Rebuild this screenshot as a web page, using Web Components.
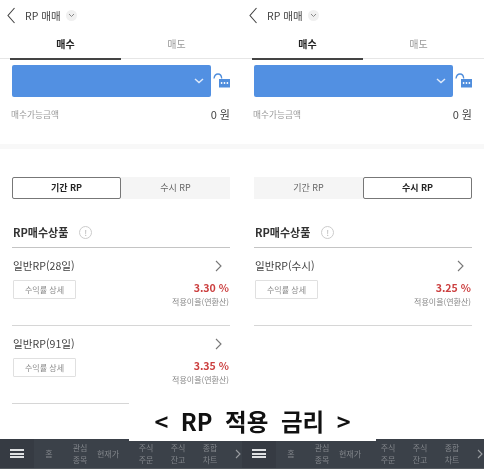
<!doctype html>
<html lang="ko">
<head>
<meta charset="UTF-8">
<title>RP 매매</title>
<style>
    html, body { margin: 0; padding: 0; background: #fff; }
    body { font-family: "Noto Sans CJK KR", "Noto Sans", sans-serif; width: 484px; height: 475px; overflow: hidden; position: relative; filter: blur(.3px); }
    #page { display: flex; }
</style>
</head>
<body>
<div id="page">
    <rp-panel active="0">
        <rp-product name="일반RP(28일)" rate="3.30 %"></rp-product>
        <rp-product name="일반RP(91일)" rate="3.35 %"></rp-product>
    </rp-panel>
    <rp-panel active="1">
        <rp-product name="일반RP(수시)" rate="3.25 %"></rp-product>
    </rp-panel>
</div>
<rp-caption>&lt; RP 적용 금리 &gt;</rp-caption>

<script type="text/javascript">
    const chevron = (d, w, h, color, sw) => `<svg width="${w}" height="${h}" viewBox="0 0 ${w} ${h}" fill="none"><path d="${d}" stroke="${color}" stroke-width="${sw}"/></svg>`

    // 상품 한 줄
    class RpProduct extends HTMLElement {
        constructor () {
            super()
            const root = this.attachShadow({mode: 'open'})
            root.innerHTML = `
            <style>
            :host { display: block; height: 77px; border-bottom: 1px solid #d6d6d6; position: relative; }
            .top { display: flex; justify-content: space-between; align-items: center; padding: 8px 8px 0 1px; height: 20px; }
            .name { font-size: 10.6px; color: #444; line-height: 20px; }
            .bottom { display: flex; justify-content: space-between; padding: 4px 1px 0 1px; }
            button { all: unset; box-sizing: border-box; width: 63px; height: 19px; border: 1px solid #e0e0e0; border-radius: 1px; font-size: 8px; color: #888; text-align: center; line-height: 17px; }
            .right { text-align: right; }
            .rate { font-size: 10.6px; font-weight: 700; color: #cc4040; line-height: 16px; }
            .sub { font-size: 8px; color: #888; line-height: 12px; margin-top: 0; }
            svg { display: block; }
            </style>
            <div class="top"><span class="name"></span>${chevron('M1 1l5 5-5 5', 7, 12, '#777', 1.1)}</div>
            <div class="bottom">
                <button>수익률 상세</button>
                <div class="right"><div class="rate"></div><div class="sub">적용이율(연환산)</div></div>
            </div>`
            root.querySelector('.name').textContent = this.getAttribute('name')
            root.querySelector('.rate').textContent = this.getAttribute('rate')
        }
    }
    customElements.define('rp-product', RpProduct)

    // 하단 메뉴
    class RpNav extends HTMLElement {
        constructor () {
            super()
            const root = this.attachShadow({mode: 'open'})
            root.innerHTML = `
            <style>
            :host { display: grid; grid-template-columns: 34px 30px 32px 34px 32px 32px 32px 16px; height: 30px; box-sizing: border-box; background: #3b4149; border-bottom: 1px solid #555a60; color: #82868b; font-size: 8px; line-height: 12px; }
            div { display: flex; align-items: center; justify-content: center; text-align: center; }
            .menu { background: #363b43; }
            .menu i { display: block; width: 14px; height: 9px; border-top: 2px solid #dfe1e3; border-bottom: 2px solid #dfe1e3; position: relative; box-sizing: border-box; }
            .menu i::after { content: ""; position: absolute; left: 0; right: 0; top: 1.5px; height: 2px; background: #dfe1e3; }
            .price { padding-right: 10px; white-space: nowrap; }
            .more { padding-left: 8px; }
            </style>
            <div class="menu"><i></i></div>
            <div>홈</div>
            <div>관심<br>종목</div>
            <div class="price">현재가</div>
            <div>주식<br>주문</div>
            <div>주식<br>잔고</div>
            <div>종합<br>차트</div>
            <div class="more">${chevron('M1 1l4 4-4 4', 6, 10, '#9a9da1', 1.1)}</div>`
        }
    }
    customElements.define('rp-nav', RpNav)

    // 화면 한 장
    class RpPanel extends HTMLElement {
        constructor () {
            super()
            const on = this.getAttribute('active') === '1'
            const root = this.attachShadow({mode: 'open'})
            root.innerHTML = `
            <style>
            :host { display: flex; flex-direction: column; width: 242px; height: 469px; box-sizing: border-box; color: #333; }
            svg { display: block; }
            header { display: flex; align-items: center; height: 30px; padding-left: 7px; }
            header .title { font-size: 10.5px; color: #444; margin-left: 9px; }
            header .down { width: 11px; height: 11px; border-radius: 50%; background: #f0f0f0; margin-left: 5px; display: flex; align-items: center; justify-content: center; }
            .tabs { display: grid; grid-template-columns: 111px 111px; padding-left: 10px; height: 28px; border-bottom: 1px solid #e6e6e6; }
            .tabs div { text-align: center; font-size: 10px; line-height: 28px; color: #999; box-sizing: border-box; }
            .tabs .on { color: #222; font-weight: 700; border-bottom: 2px solid #444; }
            .account { display: flex; align-items: center; margin: 6px 0 0 12px; }
            .box { width: 199px; height: 32px; background: #5290e2; border-radius: 2px; display: flex; align-items: center; justify-content: flex-end; padding-right: 7px; box-sizing: border-box; }
            .lock { margin-left: 2px; }
            .cash { display: flex; justify-content: space-between; align-items: center; padding: 0 12px 0 11px; height: 16px; margin-top: 9px; }
            .cash .l { font-size: 8.7px; color: #999; }
            .cash .r { font-size: 11px; color: #444; }
            .band { height: 5px; background: #f8f8f8; margin-top: 22px; }
            .seg { display: grid; grid-template-columns: 1fr 1fr; margin: 28px 12px 0; height: 22px; background: #f5f5f5; }
            .seg div { text-align: center; font-size: 9px; line-height: 20px; color: #666; border: 1px solid transparent; box-sizing: border-box; }
            .seg .on { background: #fff; border: 1px solid #777; border-radius: 2px; color: #222; font-weight: 700; }
            .head { display: flex; align-items: center; margin: 22px 12px 0; height: 22px; border-bottom: 1px solid #c4c4c4; padding: 0 1px 4px; }
            .head b { font-size: 11px; color: #333; }
            .head .info { width: 13px; height: 13px; border: 1px solid #ccc; border-radius: 50%; box-sizing: border-box; margin-left: 11px; font-size: 8px; line-height: 11px; text-align: center; color: #aaa; }
            .list { margin: 0 12px; }
            rp-nav { margin-top: auto; }
            </style>
            <header>
                ${chevron('M7.5 1L1 8.5 7.5 16', 9, 17, '#444', 1.1)}
                <span class="title">RP 매매</span>
                <span class="down">${chevron('M1 1l2.5 2.5L6 1', 7, 5, '#888', 1)}</span>
            </header>
            <div class="tabs">
                <div class="on">매수</div>
                <div>매도</div>
            </div>
            <div class="account">
                <div class="box">${chevron('M1 1l4 3.5L9 1', 10, 6, '#dfeafa', 1.5)}</div>
                <svg class="lock" width="18" height="16" viewBox="0 0 18 16" fill="none">
                    <path d="M1 5.5C1.5 2 3 1 5 1c2 0 3.5 1.5 3.7 4.5" stroke="#4f8ddc" stroke-width="1.3"/>
                    <rect x="6" y="6" width="11" height="8.5" fill="#4f8ddc"/>
                    <circle cx="8.6" cy="10" r=".9" fill="#fff"/><circle cx="11.5" cy="10" r=".9" fill="#fff"/><circle cx="14.4" cy="10" r=".9" fill="#fff"/>
                </svg>
            </div>
            <div class="cash"><span class="l">매수가능금액</span><span class="r">0 원</span></div>
            <div class="band"></div>
            <div class="seg">
                <div class="${on ? '' : 'on'}">기간 RP</div>
                <div class="${on ? 'on' : ''}">수시 RP</div>
            </div>
            <div class="head"><b>RP매수상품</b><span class="info">!</span></div>
            <div class="list"><slot></slot></div>
            <rp-nav></rp-nav>`
        }
    }
    customElements.define('rp-panel', RpPanel)

    // 가운데 설명 문구, 화면 위에 겹침
    class RpCaption extends HTMLElement {
        constructor () {
            super()
            const root = this.attachShadow({mode: 'open'})
            root.innerHTML = `
            <style>
            :host { position: absolute; left: 129px; top: 400px; width: 247px; height: 41px; background: #fff; display: flex; align-items: center; justify-content: center; font-size: 23.5px; font-weight: 700; color: #111; word-spacing: 6px; white-space: pre; }
            </style>
            <slot></slot>`
        }
    }
    customElements.define('rp-caption', RpCaption)
</script>
</body>
</html>
